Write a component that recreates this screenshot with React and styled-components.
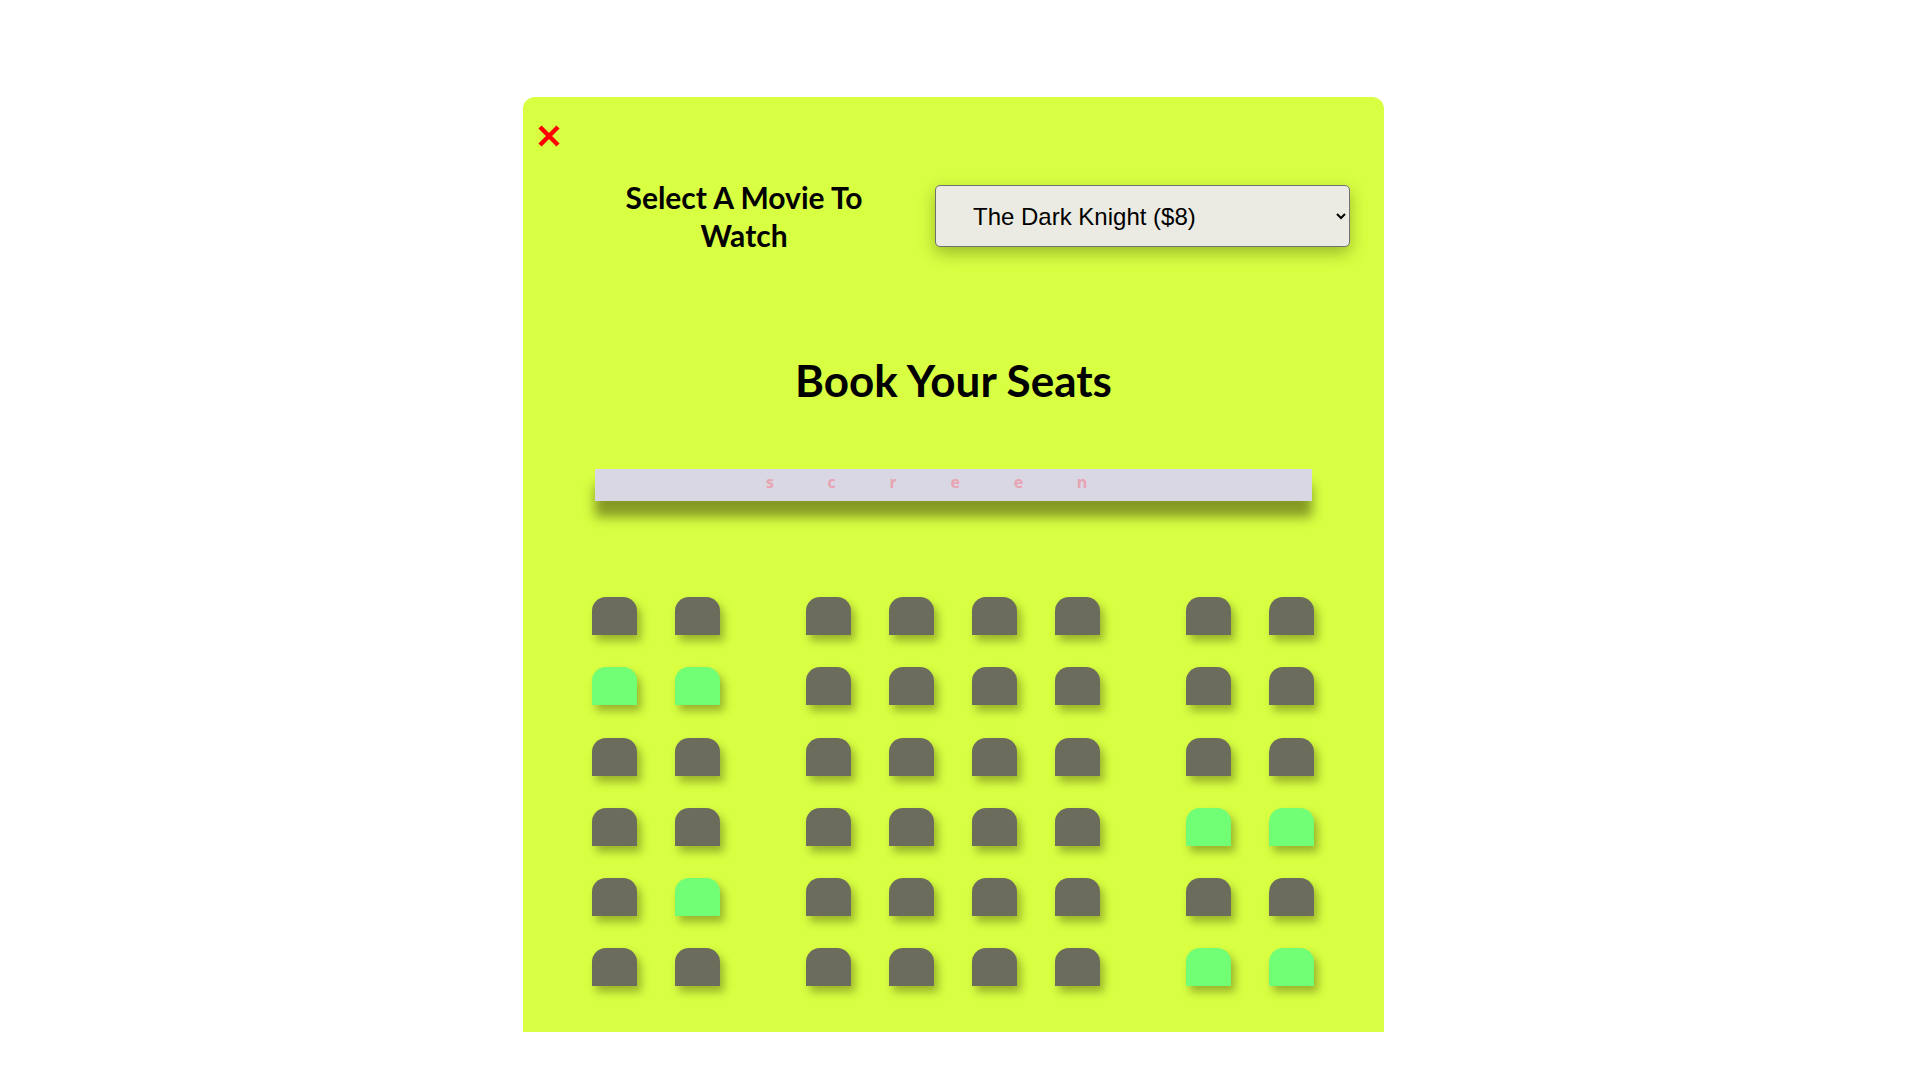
import React, { useState } from "react"
import styled, { createGlobalStyle } from "styled-components"

const GlobalStyle = createGlobalStyle`
  body {
    margin: 0;
    background: #ffffff;
    font-family: Lato, "Open Sans", "Liberation Sans", sans-serif;
  }
`

const Card = styled.div`
  width: 861px;
  margin: 97px 0 0 523px;
  padding: 28px 0 46px;
  box-sizing: border-box;
  background: #d8ff42;
  border-radius: 12px 12px 0 0;
`

const CloseButton = styled.button`
  display: block;
  margin-left: 15px;
  width: 22px;
  height: 22px;
  padding: 0;
  border: none;
  background: none;
  cursor: pointer;
`

const TopRow = styled.div`
  display: grid;
  grid-template-columns: 368px 415px;
  column-gap: 7px;
  align-items: center;
  padding-left: 37px;
  margin-top: 31px;
`

const Label = styled.label`
  text-align: center;
  font-size: 30px;
  font-weight: 700;
  line-height: 38px;
  color: #000;
`

const Select = styled.select`
  height: 62px;
  padding: 0 8px 0 33px;
  font-family: "Liberation Sans", Arial, sans-serif;
  font-size: 24px;
  color: #000;
  background: #ebebe3;
  border: 1px solid #707070;
  border-radius: 5px;
  box-shadow: 0 6px 16px rgba(60, 70, 0, 0.38);
`

const Heading = styled.h1`
  margin: 104px 0 0;
  text-align: center;
  font-size: 44px;
  line-height: 44px;
  font-weight: 700;
  color: #000;
`

const Screen = styled.div`
  width: 717px;
  height: 32px;
  margin: 67px auto 0;
  background: #d9d7e3;
  box-shadow: 0 16px 12px rgba(30, 30, 0, 0.45);
  text-align: center;
  font-family: "Open Sans", sans-serif;
  font-size: 16px;
  font-weight: 700;
  line-height: 26px;
  letter-spacing: 53.7px;
  color: #e8a4b2;
`

const SeatGrid = styled.div`
  display: flex;
  flex-direction: column;
  align-items: center;
  row-gap: 32.3px;
  margin-top: 96px;
`

const SeatRow = styled.div`
  display: flex;
  column-gap: 86px;
  margin-left: -2px;
`

const SeatGroup = styled.div`
  display: flex;
  column-gap: 38px;
`

const Seat = styled.div`
  width: 45px;
  height: 38px;
  background: ${p => (p.$selected ? "#70ff75" : "#6c6c5c")};
  border-radius: 14px 14px 0 0;
  box-shadow: 4px 6px 8px rgba(40, 40, 0, 0.35);
  cursor: pointer;
`

const groups = [2, 4, 2]

const initialSelected = [
  [],
  [0, 1],
  [],
  [6, 7],
  [1],
  [6, 7]
]

const CloseIcon = () => (
  <svg width="22" height="22" viewBox="0 0 22 22">
    <path d="M2 2 L20 20 M20 2 L2 20" stroke="#ff0000" strokeWidth="4.5" />
  </svg>
)

const App = () => {
  const [selected, setSelected] = useState(initialSelected)

  const toggle = (row, index) => {
    setSelected(prev =>
      prev.map((r, i) =>
        i !== row ? r : r.includes(index) ? r.filter(x => x !== index) : [...r, index]
      )
    )
  }

  return (
    <>
      <GlobalStyle />
      <Card>
        <CloseButton aria-label="close">
          <CloseIcon />
        </CloseButton>
        <TopRow>
          <Label htmlFor="movie">
            Select A Movie To
            <br />
            Watch
          </Label>
          <Select id="movie" defaultValue="8">
            <option value="8">The Dark Knight ($8)</option>
            <option value="10">Inception ($10)</option>
            <option value="12">Interstellar ($12)</option>
            <option value="9">Tenet ($9)</option>
          </Select>
        </TopRow>
        <Heading>Book Your Seats</Heading>
        <Screen>screen</Screen>
        <SeatGrid>
          {selected.map((rowSel, row) => {
            let offset = 0
            return (
              <SeatRow key={row}>
                {groups.map((count, g) => {
                  const start = offset
                  offset += count
                  return (
                    <SeatGroup key={g}>
                      {Array.from({ length: count }, (_, k) => {
                        const index = start + k
                        return (
                          <Seat
                            key={index}
                            $selected={rowSel.includes(index)}
                            onClick={() => toggle(row, index)}
                          />
                        )
                      })}
                    </SeatGroup>
                  )
                })}
              </SeatRow>
            )
          })}
        </SeatGrid>
      </Card>
    </>
  )
}

export default App
